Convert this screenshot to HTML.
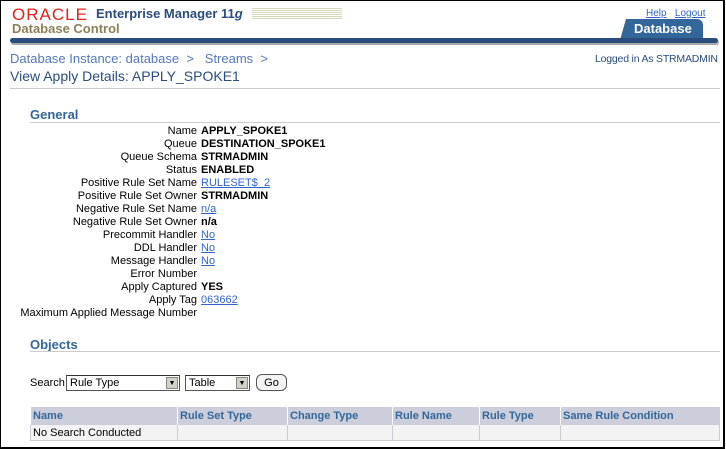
<!DOCTYPE html>
<html><head><style>
body{margin:0;width:726px;height:449px;overflow:hidden;background:#fff;font-family:"Liberation Sans",sans-serif;font-size:11px;position:relative}
.frame{position:absolute;left:0;top:0;width:722px;height:446px;border-left:1px solid #000;border-top:1px solid #000;border-right:2px solid #000;border-bottom:2px solid #000}
.a{position:absolute;white-space:nowrap}
a{color:#3366cc;text-decoration:underline}
.lbl{position:absolute;right:529px;white-space:nowrap;color:#000;font-size:11px}
.val{position:absolute;left:201px;white-space:nowrap;font-weight:bold;font-size:11px}
.h{color:#336699;font-weight:bold;font-size:13px}
table{position:absolute;left:30px;top:407px;width:690px;border-collapse:collapse;font-size:11px;table-layout:fixed}
th{background:#cccfdb;color:#336699;text-align:left;height:17px;padding:0 2px;border-left:1px solid #fff;font-size:11px;white-space:nowrap}
td{background:#f3f3f3;height:15px;padding:0 2px;border:1px solid #ccccd6;}
.sel{position:absolute;height:16px;border:1px solid #555;border-top-color:#333;background:#fff;box-sizing:border-box;font-size:11px;line-height:14px;padding-left:3px}
.arr{position:absolute;right:1px;top:1px;width:12px;height:12px;background:#d4d0c8;border:1px solid #888;box-sizing:border-box;font-size:7px;text-align:center;line-height:11px}
</style></head><body>
<div class="frame"></div>
<div class="a" style="left:12px;top:5px;color:#e2231a;font-size:17px;letter-spacing:1px">ORACLE</div>
<div class="a" style="left:96px;top:6px;color:#2b4d7d;font-weight:bold;font-size:13px">Enterprise Manager 11<i>g</i></div>
<div class="a" style="left:252px;top:8px;width:90px;height:12px;background:repeating-linear-gradient(#d8d6b8 0 1px,#fff 1px 2px)"></div>
<div class="a" style="left:12px;top:21px;color:#8b8158;font-weight:bold;font-size:13px">Database Control</div>
<div class="a" style="left:646px;top:8px;font-size:10px"><a>Help</a>&nbsp;&nbsp;&nbsp;<a>Logout</a></div>
<div class="a" style="left:620px;top:19px;width:83px;height:21px;background:#336699;border-radius:0 6px 0 0;clip-path:polygon(6px 0,100% 0,100% 100%,0 100%)"></div>
<div class="a" style="left:634px;top:21px;color:#fff;font-weight:bold;font-size:13px">Database</div>
<div class="a" style="left:10px;top:38px;width:708px;height:5px;background:#2b4d7d;border-radius:3px;box-shadow:1px 2px 0 #aaa"></div>
<div class="a" style="left:10px;top:51px;color:#5579b8;font-size:13px">Database Instance: database &nbsp;&gt;&nbsp;&nbsp; Streams &nbsp;&gt;</div>
<div class="a" style="left:10px;top:68px;color:#2b4d7d;font-size:14px">View Apply Details: APPLY_SPOKE1</div>
<div class="a" style="left:595px;top:53px;color:#2b4d7d;font-size:10.5px;letter-spacing:-0.2px">Logged in As STRMADMIN</div>
<div class="a" style="left:10px;top:88px;width:710px;height:1px;background:#ccc"></div>
<div class="a h" style="left:30px;top:107px">General</div>
<div class="a" style="left:30px;top:122px;width:690px;height:1px;background:#ccc"></div>
<div style="position:absolute;top:125px;left:0;width:726px">
<div class="lbl" style="top:0">Name</div><div class="val" style="top:0">APPLY_SPOKE1</div>
<div class="lbl" style="top:13px">Queue</div><div class="val" style="top:13px">DESTINATION_SPOKE1</div>
<div class="lbl" style="top:26px">Queue Schema</div><div class="val" style="top:26px">STRMADMIN</div>
<div class="lbl" style="top:39px">Status</div><div class="val" style="top:39px">ENABLED</div>
<div class="lbl" style="top:52px">Positive Rule Set Name</div><div class="val" style="top:52px;font-weight:normal"><a>RULESET$_2</a></div>
<div class="lbl" style="top:65px">Positive Rule Set Owner</div><div class="val" style="top:65px">STRMADMIN</div>
<div class="lbl" style="top:78px">Negative Rule Set Name</div><div class="val" style="top:78px;font-weight:normal"><a>n/a</a></div>
<div class="lbl" style="top:91px">Negative Rule Set Owner</div><div class="val" style="top:91px">n/a</div>
<div class="lbl" style="top:104px">Precommit Handler</div><div class="val" style="top:104px;font-weight:normal"><a>No</a></div>
<div class="lbl" style="top:117px">DDL Handler</div><div class="val" style="top:117px;font-weight:normal"><a>No</a></div>
<div class="lbl" style="top:130px">Message Handler</div><div class="val" style="top:130px;font-weight:normal"><a>No</a></div>
<div class="lbl" style="top:143px">Error Number</div>
<div class="lbl" style="top:156px">Apply Captured</div><div class="val" style="top:156px">YES</div>
<div class="lbl" style="top:169px">Apply Tag</div><div class="val" style="top:169px;font-weight:normal"><a>063662</a></div>
<div class="lbl" style="top:182px">Maximum Applied Message Number</div>
</div>
<div class="a h" style="left:30px;top:337px">Objects</div>
<div class="a" style="left:30px;top:351px;width:690px;height:1px;background:#ccc"></div>
<div class="a" style="left:30px;top:377px">Search</div>
<div class="sel" style="left:66px;top:375px;width:114px">Rule Type<div class="arr">▼</div></div>
<div class="sel" style="left:185px;top:375px;width:65px">Table<div class="arr">▼</div></div>
<div class="a" style="left:256px;top:374px;width:31px;height:17px;border:1px solid #555;border-radius:6px;background:#f4f4f4;text-align:center;line-height:16px;box-sizing:border-box">Go</div>
<table><colgroup><col style="width:147px"><col style="width:110px"><col style="width:105px"><col style="width:87px"><col style="width:81px"><col></colgroup>
<tr><th>Name</th><th>Rule Set Type</th><th>Change Type</th><th>Rule Name</th><th>Rule Type</th><th>Same Rule Condition</th></tr>
<tr><td>No Search Conducted</td><td></td><td></td><td></td><td></td><td></td></tr></table>
</body></html>
